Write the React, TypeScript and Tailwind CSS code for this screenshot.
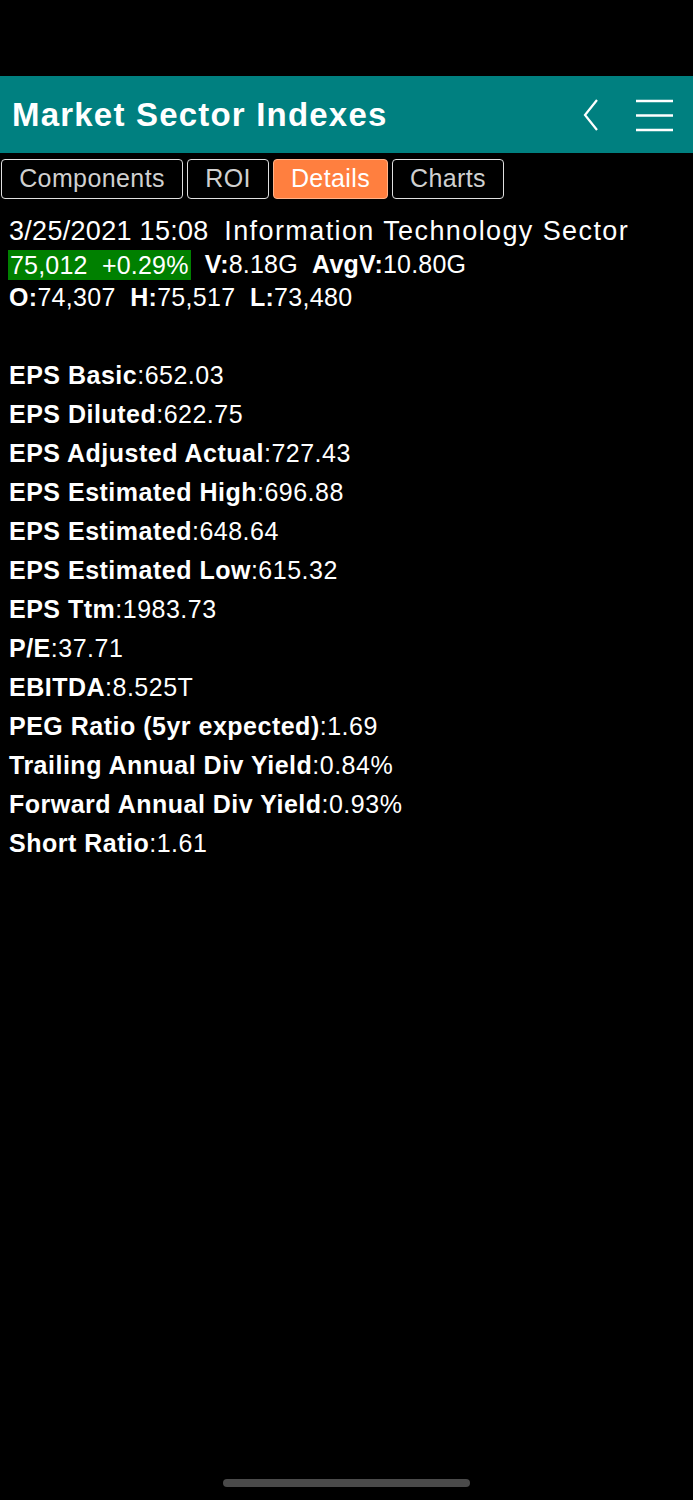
import React from "react";

const rows: [string, string][] = [
  ["EPS Basic", "652.03"],
  ["EPS Diluted", "622.75"],
  ["EPS Adjusted Actual", "727.43"],
  ["EPS Estimated High", "696.88"],
  ["EPS Estimated", "648.64"],
  ["EPS Estimated Low", "615.32"],
  ["EPS Ttm", "1983.73"],
  ["P/E", "37.71"],
  ["EBITDA", "8.525T"],
  ["PEG Ratio (5yr expected)", "1.69"],
  ["Trailing Annual Div Yield", "0.84%"],
  ["Forward Annual Div Yield", "0.93%"],
  ["Short Ratio", "1.61"],
];

const tabs = [
  { label: "Components", w: "w-[182px]", active: false },
  { label: "ROI", w: "w-[82px]", active: false },
  { label: "Details", w: "w-[115px]", active: true },
  { label: "Charts", w: "w-[112px]", active: false },
];

export default function App() {
  return (
    <div className="w-[693px] h-[1500px] bg-black flex flex-col relative overflow-hidden font-[family-name:Liberation_Sans,Arial,sans-serif]">
      <div className="h-[76px]" />
      <div className="h-[77px] bg-[#008080] flex items-center pl-[12px] pr-[20px]">
        <div className="flex-1 text-white font-bold text-[33px] tracking-[1.2px]">
          Market Sector Indexes
        </div>
        <svg width="20" height="34" viewBox="0 0 20 34" className="mr-[34px]">
          <path d="M15 2 L3 17 L15 32" fill="none" stroke="white" strokeWidth="2.2" />
        </svg>
        <svg width="37" height="34" viewBox="0 0 37 34">
          <path d="M0 3 H37 M0 17.5 H37 M0 32 H37" stroke="white" strokeWidth="2.6" />
        </svg>
      </div>
      <div className="flex gap-[4px] mt-[6px] pl-[1px]">
        {tabs.map((t) => (
          <div
            key={t.label}
            className={`${t.w} h-[40px] rounded-[4px] border-[1.5px] flex items-center justify-center text-[25px] tracking-[0.4px] ${
              t.active ? "bg-[#ff7f3f] border-[#ffb38a] text-white" : "bg-black border-[#e0e0e0] text-[#d0d0d0]"
            }`}
          >
            {t.label}
          </div>
        ))}
      </div>
      <div className="pl-[9px] mt-[16px] text-white leading-[33px]">
        <div className="text-[27px] tracking-[0.3px]">
          3/25/2021 15:08&nbsp; <span className="tracking-[1.4px]">Information Technology Sector</span>
        </div>
        <div className="flex items-center text-[25px] tracking-[0.2px]">
          <span className="bg-[#008000] ml-[-1px] pl-[2px] pr-[2px] leading-[30px]">75,012&nbsp; +0.29%</span>
          <span className="ml-[14px]"><b>V:</b>8.18G&nbsp; <b>AvgV:</b>10.80G</span>
        </div>
        <div className="text-[25px] tracking-[0.3px]">
          <b>O:</b>74,307&nbsp; <b>H:</b>75,517&nbsp; <b>L:</b>73,480
        </div>
      </div>
      <div className="pl-[9px] mt-[42px] text-white text-[25px] tracking-[0.5px] leading-[39px]">
        {rows.map(([k, v]) => (
          <div key={k}>
            <b>{k}</b>:{v}
          </div>
        ))}
      </div>
      <div className="absolute left-[223px] top-[1479px] w-[247px] h-[8px] rounded-full bg-[#4a4a4a]" />
    </div>
  );
}
